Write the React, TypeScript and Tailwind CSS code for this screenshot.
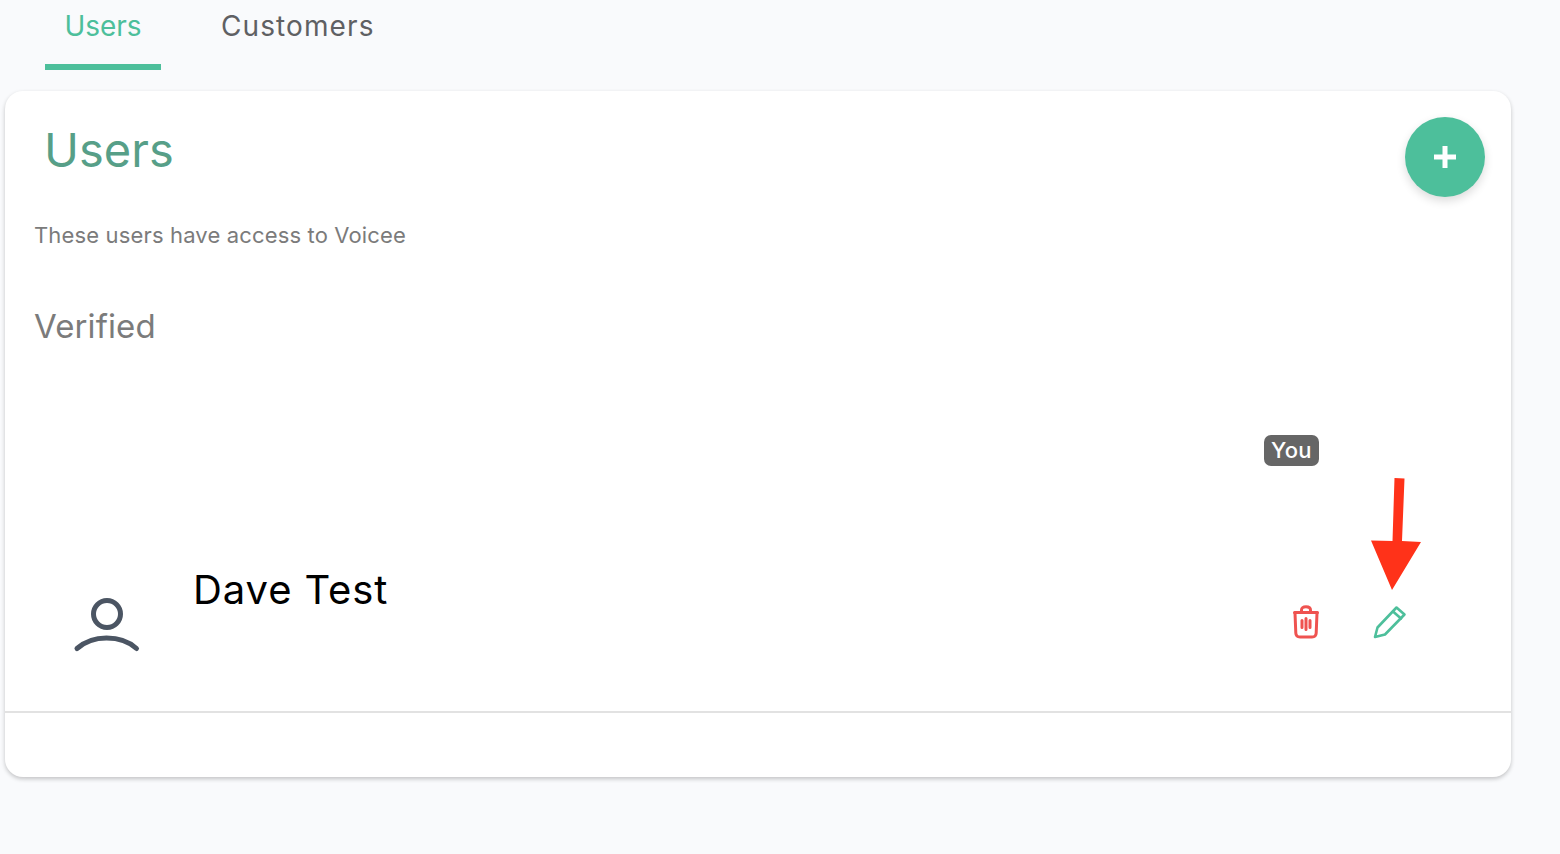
import React from "react";

function UserIcon() {
  return (
    <svg width="68" height="58" viewBox="0 0 68 58" fill="none" stroke="#4b5563" strokeWidth="5" strokeLinecap="round">
      <circle cx="34" cy="17" r="13.5" />
      <path d="M4 51.500C12 44.500 22 41 33.500 41C45 41 56 44.500 63.500 51.500" />
    </svg>
  );
}

function TrashIcon() {
  return (
    <svg width="28" height="34" viewBox="0 0 28 34" fill="none" stroke="#ef5350" strokeWidth="3" strokeLinecap="round" strokeLinejoin="round">
      <path d="M2.500 7.500H25.500" />
      <path d="M9.500 7V5C9.500 3 11 1.800 14 1.800C17 1.800 18.500 3 18.500 5V7" />
      <path d="M3 8L3.800 28C3.900 30.500 5.500 32 8 32H20C22.500 32 24.100 30.500 24.200 28L25 8" />
      <path d="M10 15.500V22.500M14 13.500V24.500M18 15.500V22.500" />
    </svg>
  );
}

function PencilIcon() {
  return (
    <svg width="34" height="34" viewBox="0 0 34 34" fill="none" stroke="#4dbf9b" strokeWidth="2.6" strokeLinecap="round" strokeLinejoin="round">
      <path d="M2 32L4.500 22.500L23.500 2.500L31.500 9.500L12 29.500Z" />
      <path d="M20 6.500L28 13.500" />
    </svg>
  );
}

export default function App() {
  return (
    <div className="relative flex h-[854px] w-[1560px] flex-col overflow-hidden bg-[#f9fafc] font-['Inter',sans-serif]">
      <div className="flex h-[70px] items-start pl-[45px]">
        <div className="flex h-[70px] w-[116px] justify-center border-b-[6px] border-[#4dbf9b] pt-[9px] text-[28px] leading-[34px] tracking-[-0.1px] text-[#4dbf9b]">
          Users
        </div>
        <div className="ml-[60px] pt-[9px] text-[28px] leading-[34px] tracking-[1.1px] text-[#5f6063]">Customers</div>
      </div>

      <div className="ml-[5px] mt-[21px] flex h-[686px] w-[1506px] flex-col rounded-[18px] bg-white shadow-[0_2px_4px_rgba(0,0,0,0.22)]">
        <div className="flex items-start justify-between pl-[39px] pr-[26px] pt-[26px]">
          <h1 className="pt-[3px] text-[47px] leading-[60px] text-[#579f88]">Users</h1>
          <button className="flex h-[80px] w-[80px] items-center justify-center rounded-full bg-[#4dbf9b] shadow-[0_4px_10px_rgba(0,0,0,0.14)]">
            <svg width="24" height="24" viewBox="0 0 24 24" stroke="white" strokeWidth="5" strokeLinecap="butt">
              <path d="M12 1V23M1 12H23" />
            </svg>
          </button>
        </div>

        <p className="ml-[29px] mt-[23px] text-[22px] leading-[30px] tracking-[0.15px] text-[#7b7b7b]">These users have access to Voicee</p>
        <h2 className="ml-[29px] mt-[56px] text-[33px] leading-[40px] tracking-[0.1px] text-[#7b7b7b]">Verified</h2>

        <div className="relative mt-[89px] flex h-[278px] border-b-2 border-[#e2e2e2]">
          <div className="ml-[68px] mt-[162px]">
            <UserIcon />
          </div>
          <div className="ml-[52px] mt-[130px] text-[40px] leading-[50px] tracking-[0.9px] text-black">Dave Test</div>
          <div className="ml-auto mr-[104px] flex flex-col items-start">
            <span className="ml-[-28px] rounded-[7px] bg-[#666666] px-[7px] text-[22px] font-medium leading-[31px] tracking-[0.3px] text-white">You</span>
            <div className="mt-[139px] flex items-start gap-[53px]">
              <TrashIcon />
              <PencilIcon />
            </div>
          </div>
        </div>
      </div>

      <svg className="absolute left-[1370px] top-[477px]" width="52" height="114" viewBox="0 0 52 114" fill="#ff3219">
        <path d="M24.500 1L34.500 1.500L32 64L51 65L22 113L1 63.500L22.500 64Z" />
      </svg>
    </div>
  );
}
